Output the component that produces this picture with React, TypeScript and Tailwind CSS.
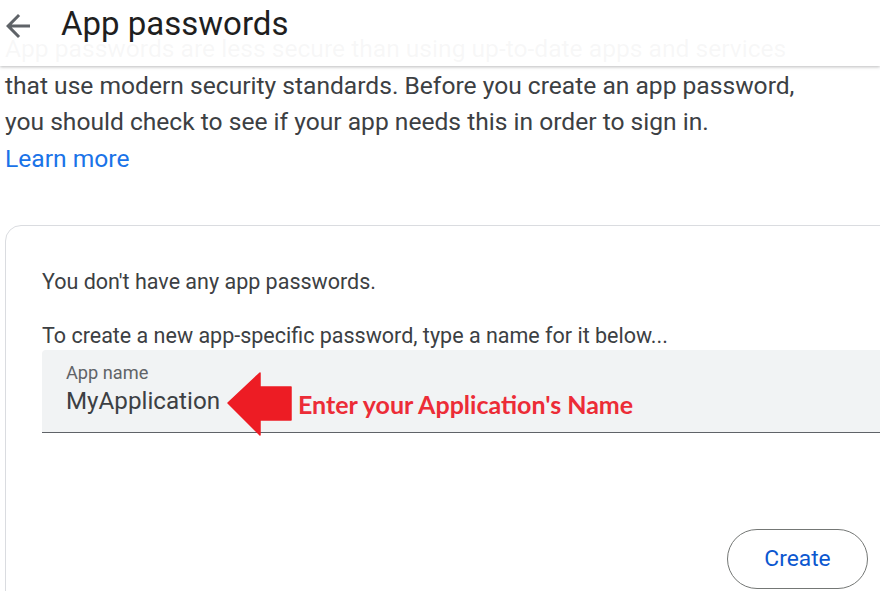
import React from 'react';

const App: React.FC = () => {
    return (
        <div className="relative w-[880px] h-[591px] overflow-hidden bg-white" style={{ fontFamily: 'Roboto, "Noto Sans", sans-serif' }}>
            {/* sticky header laid over the scrolled text */}
            <div className="absolute top-0 left-0 right-0 z-10 h-[66px] bg-white/[0.96] shadow-[0_1px_3px_rgba(60,64,67,0.35)] flex items-start">
                <button className="mt-[8px] w-[36px] h-[36px] flex items-center justify-center text-[#5f6368]">
                    <svg width="36" height="36" viewBox="0 0 24 24" fill="currentColor">
                        <path d="M20 11H7.83l5.59-5.59L12 4l-8 8 8 8 1.41-1.41L7.83 13H20v-2z" />
                    </svg>
                </button>
                <h1 className="ml-[25px] mt-[4px] text-[33px] leading-[40px] text-[#1f1f1f]">App passwords</h1>
            </div>

            <div className="pt-[31px] pl-[5px]">
                <p className="text-[24.6px] leading-[36.5px] text-[#3c4043]">
                    App passwords are less secure than using up-to-date apps and services
                    <br />
                    that use modern security standards. Before you create an app password,
                    <br />
                    you should check to see if your app needs this in order to sign in.
                    <br />
                    <a className="text-[#1a73e8]">Learn more</a>
                </p>

                <div className="mt-[48px] w-[900px] h-[400px] border border-[#dadce0] rounded-[16px] pl-[36px] pt-[44px]">
                    <p className="text-[21.5px] leading-[24px] text-[#3c4043]">You don't have any app passwords.</p>
                    <p className="mt-[30px] text-[21.5px] leading-[24px] text-[#3c4043]">
                        To create a new app-specific password, type a name for it below...
                    </p>
                    <div className="relative mt-[2px] h-[83px] bg-[#f1f3f4] rounded-t-[4px] border-b border-[#5f6368] pl-[24px] pt-[11px]">
                        <div className="text-[18.2px] leading-[24px] text-[#5f6368]">App name</div>
                        <div className="text-[24.2px] leading-[32px] text-[#3c4043]">MyApplication</div>

                        {/* red annotation laid over the field */}
                        <svg className="absolute left-[185px] top-[22px]" width="66" height="64" viewBox="0 0 66 64">
                            <path d="M1 31 L33 1 L33 15 L64 15 L64 48 L33 48 L33 63 Z" fill="#ed1c24" stroke="#ed1c24" strokeWidth="1.5" strokeLinejoin="round" />
                        </svg>
                        <span
                            className="absolute left-[256px] top-[38px] text-[25px] leading-[32px] font-bold text-[#ec2c37]"
                            style={{ fontFamily: 'Lato, "Open Sans", sans-serif' }}
                        >
                            Enter your Application's Name
                        </span>
                    </div>
                    <div className="flex justify-end pr-[36px] mt-[96px]">
                        <button className="w-[141px] h-[60px] rounded-full border border-[#747775] text-[#0b57d0] text-[22.8px]">
                            Create
                        </button>
                    </div>
                </div>
            </div>
        </div>
    );
};

export default App;
